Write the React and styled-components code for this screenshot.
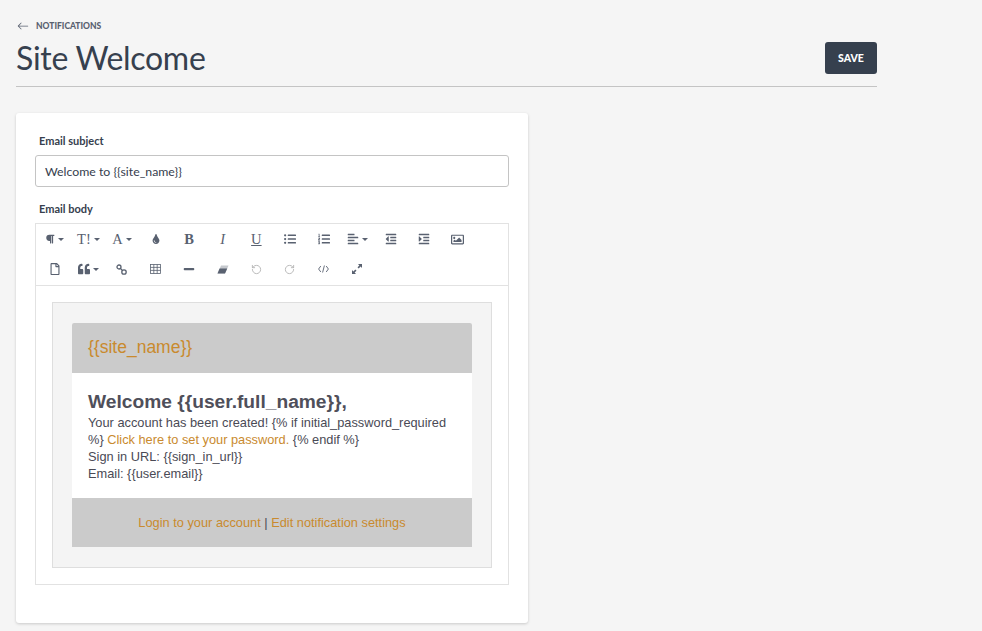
import styled, { createGlobalStyle } from 'styled-components';
import {
  FaParagraph,
  FaTint,
  FaListUl,
  FaListOl,
  FaAlignLeft,
  FaOutdent,
  FaIndent,
  FaRegImage,
  FaRegFile,
  FaQuoteLeft,
  FaMinus,
} from 'react-icons/fa';
import { BsArrowLeft } from 'react-icons/bs';
import { RotateCcw, RotateCw } from 'lucide-react';

const GlobalStyle = createGlobalStyle`
  * {
    box-sizing: border-box;
  }

  html,
  body {
    margin: 0;
    height: 100%;
    overflow: hidden;
    background: #f5f5f5;
    font-family: 'Lato', 'Noto Sans', sans-serif;
    color: #36404e;
  }
`;

const Page = styled.div`
  padding: 0 16px;
  width: 893px;
`;

const Header = styled.header`
  display: flex;
  justify-content: space-between;
  align-items: flex-end;
  height: 87px;
  padding: 0 0 9px;
  border-bottom: 1px solid #c4c4c4;
`;

const Crumb = styled.div`
  display: flex;
  align-items: center;
  gap: 7px;
  height: 12px;
  margin-bottom: 7px;
  font-size: 8.5px;
  font-weight: 900;
  color: #596170;

  svg {
    font-size: 12px;
    margin-left: 1px;
  }
`;

const Title = styled.h1`
  margin: 0;
  font-size: 32px;
  line-height: 38px;
  letter-spacing: -0.3px;
  font-weight: 400;
  color: #36404e;
`;

const SaveButton = styled.button`
  width: 52px;
  height: 32px;
  margin-bottom: 3px;
  border: 0;
  border-radius: 3px;
  background: #36404e;
  color: #fff;
  font-family: inherit;
  font-size: 10.5px;
  font-weight: 900;
`;

const Card = styled.main`
  width: 512px;
  height: 510px;
  margin-top: 26px;
  padding: 20px 19px 0;
  background: #fff;
  border-radius: 3px;
  box-shadow: 0 1px 3px rgba(0, 0, 0, 0.18);
`;

const Label = styled.div`
  height: 16px;
  padding-left: 4px;
  font-size: 11px;
  line-height: 16px;
  font-weight: 700;
  color: #36404e;
`;

const SubjectInput = styled.div`
  height: 32px;
  margin: 6px 0 14px;
  padding: 0 9px;
  border: 1px solid #c4c4c4;
  border-radius: 3px;
  font-size: 12.3px;
  line-height: 31px;
  color: #36404e;
`;

const Editor = styled.div`
  margin-top: 6px;
  border: 1px solid #e2e2e2;
  height: 362px;
`;

const Toolbar = styled.div`
  display: flex;
  flex-wrap: wrap;
  align-content: flex-start;
  height: 62px;
  padding: 0 2px;
  border-bottom: 1px solid #e2e2e2;
`;

const Tool = styled.div`
  display: flex;
  align-items: center;
  justify-content: center;
  gap: 3px;
  width: 33.6px;
  height: 30px;
  font-size: ${(p) => p.$size || 12}px;
  color: ${(p) => (p.$muted ? '#b5b5b5' : '#596170')};
`;

const Letter = styled.span`
  font-family: 'Liberation Serif', serif;
  font-size: 14.5px;
  line-height: 1;
  font-weight: ${(p) => (p.$bold ? 700 : 400)};
  font-style: ${(p) => (p.$italic ? 'italic' : 'normal')};
  text-decoration: ${(p) => (p.$underline ? 'underline' : 'none')};
`;

const Caret = styled.i`
  width: 0;
  height: 0;
  border-left: 3px solid transparent;
  border-right: 3px solid transparent;
  border-top: 3px solid #596170;
`;

const Content = styled.div`
  padding: 16px 16px 0;
`;

const Preview = styled.div`
  height: 266px;
  padding: 20px 19px;
  background: #f4f4f4;
  border: 1px solid #dedede;
`;

const Mail = styled.div`
  font-family: 'Liberation Sans', Arial, sans-serif;
  background: #fff;
  border-radius: 2px 2px 0 0;
  overflow: hidden;
`;

const MailHeader = styled.div`
  height: 50px;
  padding: 0 16px;
  background: #cbcbcb;
  color: #c98a2e;
  font-size: 17.5px;
  line-height: 48px;
`;

const MailBody = styled.div`
  height: 125px;
  padding: 16px 16px 0;
  font-size: 12.8px;
  line-height: 17px;
  color: #4a4a55;
`;

const MailTitle = styled.div`
  font-size: 19.2px;
  line-height: 25px;
  font-weight: 700;
  color: #4f4f5a;
`;

const MailLink = styled.span`
  color: #c98a2e;
`;

const MailFooter = styled.div`
  height: 49px;
  background: #cbcbcb;
  font-size: 12.8px;
  line-height: 50px;
  text-align: center;
  color: #4a4a55;
`;

const LinkIcon = () => (
  <svg width='11' height='11' viewBox='0 0 11 11' fill='none' stroke='currentColor' strokeWidth='1.3'>
    <circle cx='3' cy='3' r='2' />
    <circle cx='8' cy='8' r='2.2' />
    <path d='M4.4 4.4l2.2 2.2' />
  </svg>
);

const TableIcon = () => (
  <svg width='11' height='10' viewBox='0 0 11 10' fill='none' stroke='currentColor' strokeWidth='0.8'>
    <rect x='0.5' y='0.5' width='10' height='9' />
    <path d='M0.5 3.4h10M0.5 6.4h10M3.8 0.5v9M7.2 0.5v9' />
  </svg>
);

const EraserIcon = () => (
  <svg width='12' height='9' viewBox='0 0 12 9' fill='currentColor'>
    <path d='M4 0.5H11.5L8 8.5H0.5Z' fillOpacity='0.35' />
    <path d='M2.6 3.5H10.2L8 8.5H0.5Z' />
  </svg>
);

const CodeIcon = () => (
  <svg width='11' height='8' viewBox='0 0 11 8' fill='none' stroke='currentColor' strokeWidth='0.9'>
    <path d='M2.8 1L0.6 4l2.2 3M8.2 1l2.2 3-2.2 3M6.4 0.5L4.6 7.5' />
  </svg>
);

const ExpandIcon = () => (
  <svg width='10' height='10' viewBox='0 0 10 10' fill='currentColor'>
    <path d='M6 0h4v4L8.6 2.6 6.7 4.5 5.5 3.3 7.4 1.4Z' />
    <path d='M4 10H0V6l1.4 1.4 1.9-1.9 1.2 1.2-1.9 1.9Z' />
  </svg>
);

const tools = [
  { icon: <FaParagraph />, caret: true, size: 10 },
  { icon: <Letter>T!</Letter>, caret: true },
  { icon: <Letter>A</Letter>, caret: true },
  { icon: <FaTint />, size: 10 },
  { icon: <Letter $bold>B</Letter> },
  { icon: <Letter $italic>I</Letter> },
  { icon: <Letter $underline>U</Letter> },
  { icon: <FaListUl /> },
  { icon: <FaListOl /> },
  { icon: <FaAlignLeft />, caret: true },
  { icon: <FaOutdent /> },
  { icon: <FaIndent /> },
  { icon: <FaRegImage />, size: 13 },
  { icon: <FaRegFile /> },
  { icon: <FaQuoteLeft />, caret: true },
  { icon: <LinkIcon /> },
  { icon: <TableIcon /> },
  { icon: <FaMinus /> },
  { icon: <EraserIcon /> },
  { icon: <RotateCcw size={11} />, muted: true },
  { icon: <RotateCw size={11} />, muted: true },
  { icon: <CodeIcon /> },
  { icon: <ExpandIcon /> },
];

export default function App() {
  return (
    <>
      <GlobalStyle />
      <Page>
        <Header>
          <div>
            <Crumb>
              <BsArrowLeft />
              NOTIFICATIONS
            </Crumb>
            <Title>Site Welcome</Title>
          </div>
          <SaveButton>SAVE</SaveButton>
        </Header>
        <Card>
          <Label>Email subject</Label>
          <SubjectInput>Welcome to {'{{site_name}}'}</SubjectInput>
          <Label>Email body</Label>
          <Editor>
            <Toolbar>
              {tools.map(({ icon, caret, size, muted }, index) => (
                <Tool key={index} $size={size} $muted={muted}>
                  {icon}
                  {caret && <Caret />}
                </Tool>
              ))}
            </Toolbar>
            <Content>
              <Preview>
                <Mail>
                  <MailHeader>{'{{site_name}}'}</MailHeader>
                  <MailBody>
                    <MailTitle>Welcome {'{{user.full_name}}'},</MailTitle>
                    Your account has been created! {'{% if initial_password_required'}
                    <br />
                    {'%}'} <MailLink>Click here to set your password.</MailLink> {'{% endif %}'}
                    <br />
                    Sign in URL: {'{{sign_in_url}}'}
                    <br />
                    Email: {'{{user.email}}'}
                  </MailBody>
                  <MailFooter>
                    <MailLink>Login to your account</MailLink> |{' '}
                    <MailLink>Edit notification settings</MailLink>
                  </MailFooter>
                </Mail>
              </Preview>
            </Content>
          </Editor>
        </Card>
      </Page>
    </>
  );
}
